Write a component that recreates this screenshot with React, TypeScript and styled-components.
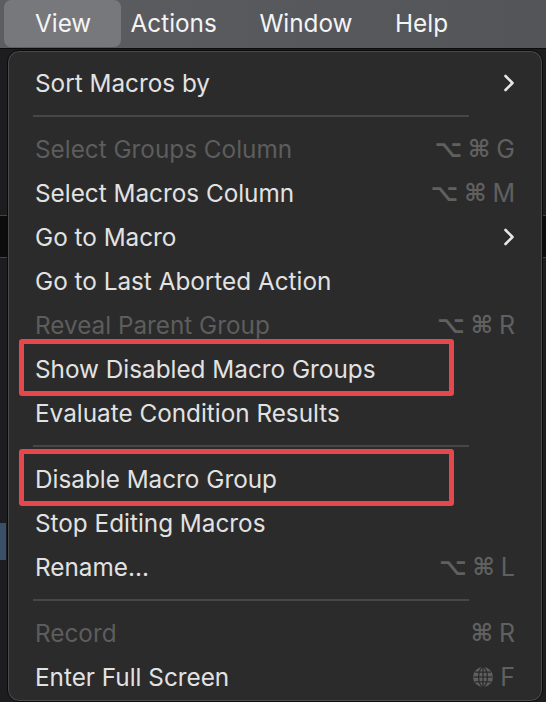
import React from 'react';
import styled, { createGlobalStyle } from 'styled-components';

const GlobalStyle = createGlobalStyle`
  html, body {
    margin: 0;
    padding: 0;
    background: #1c1c1e;
  }
  *, *::before, *::after {
    box-sizing: border-box;
  }
`;

type Item =
  | { kind: 'sep' }
  | {
      kind: 'item';
      label: string;
      disabled?: boolean;
      submenu?: boolean;
      keys?: string;
      globe?: boolean;
      marked?: boolean;
    };

const items: Item[] = [
  { kind: 'item', label: 'Sort Macros by', submenu: true },
  { kind: 'sep' },
  { kind: 'item', label: 'Select Groups Column', disabled: true, keys: '⌥⌘G' },
  { kind: 'item', label: 'Select Macros Column', keys: '⌥⌘M' },
  { kind: 'item', label: 'Go to Macro', submenu: true },
  { kind: 'item', label: 'Go to Last Aborted Action' },
  { kind: 'item', label: 'Reveal Parent Group', disabled: true, keys: '⌥⌘R' },
  { kind: 'item', label: 'Show Disabled Macro Groups', marked: true },
  { kind: 'item', label: 'Evaluate Condition Results' },
  { kind: 'sep' },
  { kind: 'item', label: 'Disable Macro Group', marked: true },
  { kind: 'item', label: 'Stop Editing Macros' },
  { kind: 'item', label: 'Rename…', keys: '⌥⌘L' },
  { kind: 'sep' },
  { kind: 'item', label: 'Record', disabled: true, keys: '⌘R' },
  { kind: 'item', label: 'Enter Full Screen', keys: 'F', globe: true },
];

function Chevron() {
  return (
    <svg width="12" height="18" viewBox="0 0 12 18">
      <polyline
        points="2.5,2 9.5,9 2.5,16"
        fill="none"
        stroke="#e6e6e6"
        strokeWidth="2.6"
        strokeLinecap="round"
        strokeLinejoin="round"
      />
    </svg>
  );
}

function Globe() {
  return (
    <svg width="22" height="22" viewBox="0 0 22 22">
      <circle cx="11" cy="11" r="10" fill="#5f5f5f" />
      <g fill="none" stroke="#2b2b2b" strokeWidth="1.2">
        <ellipse cx="11" cy="11" rx="4.4" ry="9.6" />
        <line x1="11" y1="1.4" x2="11" y2="20.6" />
        <line x1="1.4" y1="11" x2="20.6" y2="11" />
        <path d="M3 6.2 H19 M3 15.8 H19" />
      </g>
    </svg>
  );
}

function App() {
  return (
    <>
      <GlobalStyle />
      <Page>
        <MenuBar>
          <BarItem $active>View</BarItem>
          <BarItem>Actions</BarItem>
          <BarItem>Window</BarItem>
          <BarItem>Help</BarItem>
        </MenuBar>
        <Menu>
          {items.map((it, i) =>
            it.kind === 'sep' ? (
              <Separator key={i} />
            ) : (
              <Row key={i} $marked={it.marked}>
                <Label $disabled={it.disabled}>{it.label}</Label>
                {it.submenu && <Chevron />}
                {(it.keys || it.globe) && (
                  <Keys>
                    {it.globe && <Globe />}
                    {it.keys &&
                      it.keys.split('').map((k, j) => <Key key={j}>{k}</Key>)}
                  </Keys>
                )}
              </Row>
            )
          )}
        </Menu>
      </Page>
    </>
  );
}

const Page = styled.div`
  width: 546px;
  height: 702px;
  overflow: hidden;
  font-family: Inter, 'Noto Sans', 'Liberation Sans', sans-serif;
  background:
    linear-gradient(#3a5068, #3a5068) 0 523px / 6px 37px no-repeat,
    linear-gradient(#0c0c0c, #0c0c0c) 0 216px / 100% 41px no-repeat,
    linear-gradient(#444, #444) 0 215px / 100% 1px no-repeat,
    linear-gradient(#444, #444) 0 257px / 100% 1px no-repeat,
    #1d1d1f;
`;

const MenuBar = styled.div`
  height: 49px;
  display: flex;
  align-items: stretch;
  padding-left: 4px;
  background: linear-gradient(90deg, #5c5d61, #545559);
  border-bottom: 1px solid #0b0b0c;
  padding-bottom: 1px;
`;

const BarItem = styled.div<{ $active?: boolean }>`
  display: flex;
  align-items: center;
  font-size: 24.3px;
  color: #f4f4f5;
  padding: ${(p) => (p.$active ? '0 30px 2px 31px' : '0 21.3px 2px')};
  margin-right: ${(p) => (p.$active ? '-12px' : '0')};
  border-radius: 7px;
  background: ${(p) => (p.$active ? '#77787c' : 'transparent')};
`;

const Menu = styled.div`
  margin: 1px 3px 0 7px;
  height: 652px;
  border-radius: 12px;
  background: #2b2b2b;
  border: 1px solid #0a0a0a;
  box-shadow: inset 0 0 0 1px #4a4a4b;
  padding: 10px 27px 0 0;
  display: flex;
  flex-direction: column;
`;

const Row = styled.div<{ $marked?: boolean }>`
  position: relative;
  height: 44px;
  flex: none;
  display: flex;
  align-items: center;
  justify-content: space-between;
  padding-left: 27px;
  font-size: 24.3px;

  &::after {
    content: '';
    display: ${(p) => (p.$marked ? 'block' : 'none')};
    position: absolute;
    left: 11px;
    width: 435px;
    top: -8px;
    bottom: -4.5px;
    border: 5px solid #e5474c;
    border-radius: 3px;
    pointer-events: none;
  }
`;

const Label = styled.span<{ $disabled?: boolean }>`
  color: ${(p) => (p.$disabled ? '#5d5d5d' : '#e2e2e2')};
  white-space: nowrap;
`;

const Keys = styled.span`
  display: flex;
  align-items: center;
  gap: 6px;
  color: #606060;
`;

const Key = styled.span`
  font-family: 'DejaVu Sans', Inter, sans-serif;
  font-size: 24px;
  font-weight: bold;
  &:last-child {
    font-family: Inter, 'Liberation Sans', sans-serif;
    font-weight: normal;
    font-size: 25px;
  }
`;

const Separator = styled.div`
  height: 22px;
  flex: none;
  margin: 0 46px 0 25px;
  display: flex;
  align-items: center;
  &::before {
    content: '';
    flex: 1;
    height: 2px;
    background: #474747;
  }
`;

export default App;
